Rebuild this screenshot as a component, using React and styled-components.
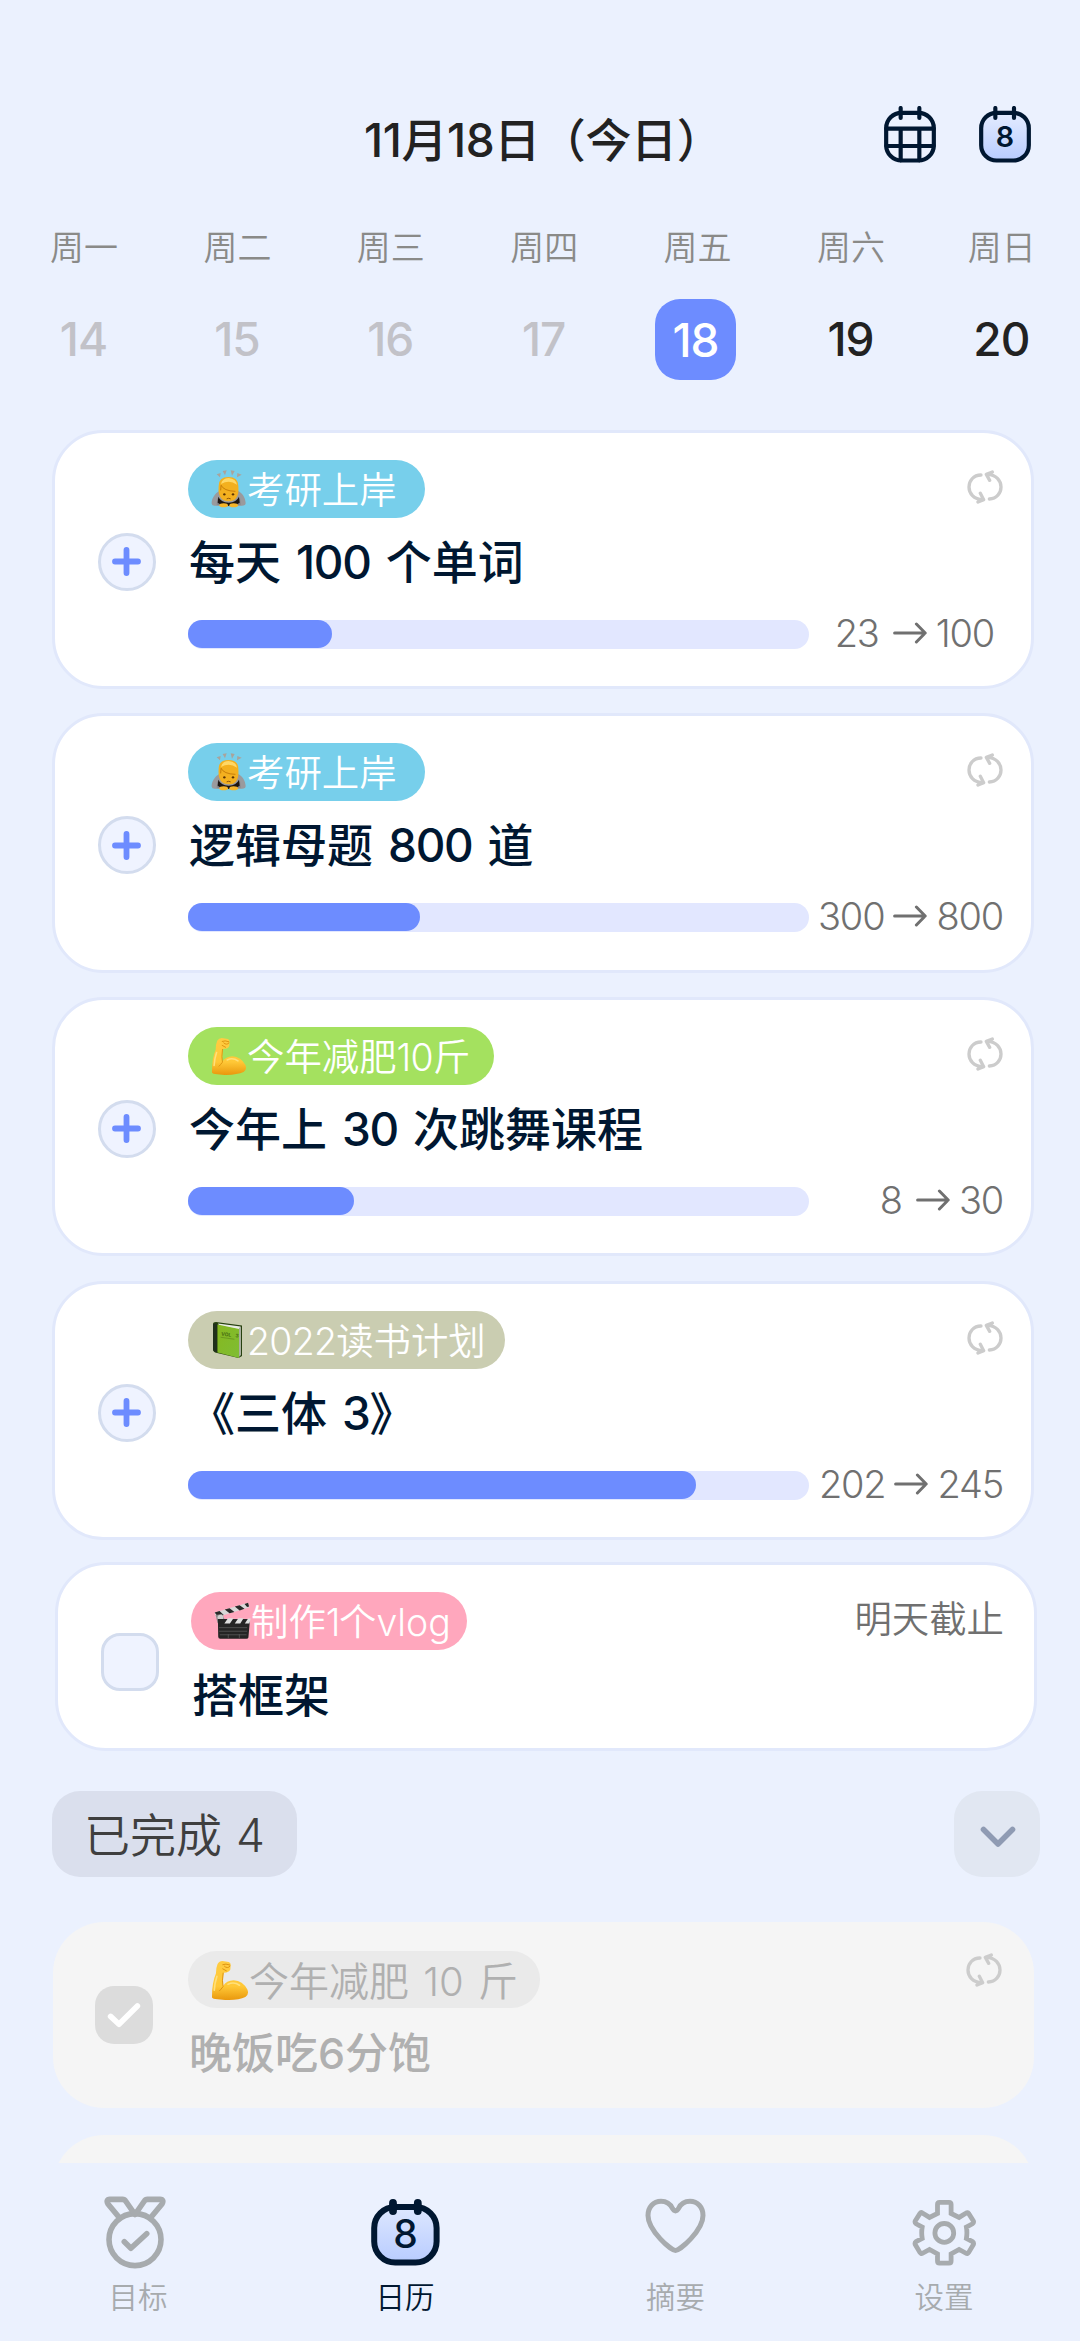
import React from 'react';
import styled, { createGlobalStyle } from 'styled-components';

const GlobalStyle = createGlobalStyle`
  * {
    box-sizing: border-box;
  }

  body {
    margin: 0;
    background: #ebf1fe;
    font-family: Inter, "Noto Sans CJK SC", sans-serif;
  }
`

const Page = styled.div`
  width: 1080px;
  height: 2341px;
  display: flex;
  flex-direction: column;
  overflow: hidden;
  background: #ebf1fe;
`

const Header = styled.header`
  height: 202px;
  padding: 77px 49px 0 364px;
  display: flex;
  justify-content: space-between;
`

const Heading = styled.h1`
  margin: 27px 0 0;
  font-size: 46px;
  line-height: 72px;
  font-weight: 500;
  letter-spacing: -0.4px;
  white-space: nowrap;
  color: #222;
`

const HeaderIcons = styled.div`
  display: flex;
  gap: 43px;
  padding-top: 29px;
`

const Week = styled.div`
  height: 202px;
  padding: 20px 0 0 43px;
  display: flex;
  gap: 71.4px;
`

const Day = styled.div`
  width: 82px;
  display: flex;
  flex-direction: column;
  align-items: center;

  &:last-child {
    width: 77px;
  }
`

const DayName = styled.span`
  font-size: 34px;
  line-height: 52px;
  font-weight: 350;
  color: #8a8a88;
  white-space: nowrap;
`

const DayNumber = styled.span`
  width: 81px;
  height: 81px;
  flex: none;
  margin-top: 25px;
  margin-right: ${p => (p.$active ? '4px' : '1px')};
  border-radius: 25px;
  font-size: 46px;
  line-height: ${p => (p.$active ? 83 : 80)}px;
  font-weight: 500;
  letter-spacing: -1px;
  text-align: center;
  background: ${p => (p.$active ? '#6d8cff' : 'transparent')};
  color: ${p => (p.$active ? '#fff' : p.$past ? '#c2c2c8' : '#222')};
`

const List = styled.main`
  flex: 1;
  min-height: 0;
  overflow: hidden;
  padding: 25.6px 46px 0 52px;
`

const Card = styled.section`
  width: 982px;
  height: ${p => (p.$short ? '188.6px' : '259.4px')};
  margin-top: ${p => (p.$short ? '-2.4px' : 0)};
  margin-bottom: ${p => (p.$short ? '40px' : '24.3px')};
  margin-left: ${p => (p.$short ? '3px' : 0)};
  padding: 27px 28px 0 43px;
  display: flex;
  border: 3px solid #e1e8fb;
  border-radius: 51px;
  background: #fff;
`

const DoneCard = styled(Card)`
  width: 981px;
  height: 186px;
  margin: 0 0 27px 1px;
  padding: 29px 32px 0 45px;
  border: 0;
  background: #f5f5f5;
`

const Side = styled.div`
  width: 90px;
  flex: none;
  padding-top: ${p => p.$top}px;
`

const Body = styled.div`
  flex: 1;
  min-width: 0;
`

const TopRow = styled.div`
  display: flex;
  justify-content: space-between;
  align-items: flex-start;
`

const RepeatSlot = styled.div`
  padding-top: ${p => p.$top || 0}px;
`

const Tag = styled.span`
  height: ${p => (p.$done ? 57 : 58)}px;
  padding: 0 ${p => p.$end || 28}px ${p => (p.$done ? 0 : 2)}px 23px;
  display: flex;
  align-items: center;
  border-radius: 29px;
  font-size: ${p => (p.$done ? 40 : 37.4)}px;
  font-weight: 350;
  word-spacing: 3px;
  white-space: nowrap;
  background: ${p => p.$bg};
  color: ${p => (p.$done ? '#b0b0b0' : '#fff')};
`

const Title = styled.h2`
  margin: ${p => p.$top}px 0 0 1px;
  font-size: ${p => (p.$done ? 43 : 46)}px;
  line-height: 60px;
  font-weight: 500;
  word-spacing: 2.6px;
  white-space: pre;
  color: ${p => (p.$done ? '#b0b0b0' : '#001731')};
`

const Digits = styled.span`
  letter-spacing: ${p => p.$spacing}px;
`

const ProgressRow = styled.div`
  height: 46px;
  margin-top: 19px;
  display: flex;
  align-items: center;
  justify-content: space-between;
`

const Track = styled.div`
  width: 621px;
  height: 29px;
  margin-top: 1px;
  border-radius: 15px;
  background: #e2e7ff;
`

const Fill = styled.div`
  height: 28px;
  border-radius: 14px;
  background: #6d8cff;
`

const Amount = styled.div`
  display: flex;
  align-items: center;
  gap: 9px;
  margin-right: ${p => p.$end || 0}px;
  padding-bottom: 2px;
  font-size: 38px;
  font-weight: 360;
  letter-spacing: -1.2px;
  color: #707070;
`

const From = styled.span`
  margin-right: ${p => p.$gap || 0}px;
`

const AddButton = styled.button`
  width: 58px;
  height: 58px;
  padding: 0 1px 0 0;
  display: flex;
  align-items: center;
  justify-content: center;
  border: 3px solid #d3dcee;
  border-radius: 50%;
  background: #eff3ff;
`

const CheckBox = styled.div`
  width: 58px;
  height: 58px;
  margin-left: ${p => (p.$checked ? -3 : -0.5)}px;
  display: flex;
  align-items: center;
  justify-content: center;
  border: ${p => (p.$checked ? 0 : '3px solid #d3dcee')};
  border-radius: 19px;
  background: ${p => (p.$checked ? '#dcdcdc' : '#eff3ff')};
`

const Deadline = styled.span`
  margin-right: 2px;
  font-size: 37.4px;
  line-height: 56px;
  font-weight: 350;
  color: #707070;
`

const DoneBar = styled.div`
  width: 988px;
  margin-bottom: 45px;
  display: flex;
  justify-content: space-between;
`

const DoneLabel = styled.div`
  width: 245px;
  height: 86px;
  padding-left: 32px;
  border-radius: 28px;
  font-size: 46px;
  line-height: 88px;
  font-weight: 350;
  word-spacing: 1px;
  white-space: pre;
  color: #3f3f3f;
  background: #dadfed;
`

const FoldButton = styled.button`
  width: 86px;
  height: 86px;
  padding: 6px 0 0 2px;
  display: flex;
  align-items: center;
  justify-content: center;
  border: 0;
  border-radius: 28px;
  background: #e1e7f2;
`

const TabBar = styled.nav`
  height: 178px;
  display: grid;
  grid-template-columns: repeat(4, 1fr);
`

const Tab = styled.div`
  display: flex;
  flex-direction: column;
  align-items: center;
  color: ${p => (p.$active ? '#001731' : '#a7abae')};
`

const TabIcon = styled.div`
  height: 112px;
  padding-top: ${p => p.$top}px;
`

const TabLabel = styled.span`
  margin-left: ${p => p.$shift || 0}px;
  font-size: 29.5px;
  line-height: 44px;
  font-weight: 350;
`

const Icon = styled.svg`
  display: block;
  flex: none;
  fill: none;
  stroke-linecap: round;
  stroke-linejoin: round;
`

const Emoji = styled(Icon)`
  margin-top: 2px;
`

const GridCalendarIcon = () => (
    <Icon width="52" height="57" viewBox="72 48 156 171" stroke="#001731" strokeWidth="12.5">
        <rect x="78.5" y="68.5" width="143" height="143" rx="46"/>
        <path d="M79 116H221M79 168H221M122 116V211M178 116V211M122 54V84M178 54V84"/>
    </Icon>
)

const DayCalendarIcon = () => (
    <Icon width="52" height="57" viewBox="72 48 156 171" stroke="#001731" strokeWidth="12.5">
        <defs>
            <linearGradient id="day" x1="0" y1="0" x2="0" y2="1">
                <stop offset="0" stopColor="#e4ecff"/>
                <stop offset="1" stopColor="#b8ccff"/>
            </linearGradient>
        </defs>
        <rect x="78.5" y="68.5" width="143" height="143" rx="46" fill="url(#day)"/>
        <path d="M121 54V84M177 54V84"/>
        <text x="150" y="171" fontSize="86" fontWeight="600" textAnchor="middle" fill="#001731" stroke="none">8</text>
    </Icon>
)

const CalendarTabIcon = () => (
    <Icon width="69" height="68" viewBox="0 0 69 68" stroke="#001731" strokeWidth="6">
        <defs>
            <linearGradient id="tab" x1="0" y1="0" x2="0" y2="1">
                <stop offset="0" stopColor="#dde7ff"/>
                <stop offset="1" stopColor="#b8ccff"/>
            </linearGradient>
        </defs>
        <rect x="3.2" y="9" width="62.4" height="55.6" rx="21" fill="url(#tab)"/>
        <path d="M22 5V13M46.8 5V13" strokeWidth="7.8"/>
        <text x="34.4" y="50.2" fontSize="39" fontWeight="500" textAnchor="middle" fill="#001731" stroke="none">8</text>
    </Icon>
)

const MedalIcon = () => (
    <Icon width="62" height="73" viewBox="0 0 62 73" stroke="currentColor" strokeWidth="5.6">
        <circle cx="31" cy="43.6" r="26"/>
        <path d="M14.8 21L4 8Q1.6 3.6 6 3.4H18.5Q20.6 3.4 21.6 5L31 18.5L40.4 5Q41.4 3.4 43.5 3.4H56Q60.4 3.6 58 8L47.2 21"/>
        <path d="M20.3 45.7L26.9 52.3L42.7 37.7"/>
    </Icon>
)

const HeartIcon = () => (
    <Icon width="61" height="56" viewBox="0 0 61 56" stroke="currentColor" strokeWidth="5">
        <path d="M30.5 52.4C26 52.4 3 32.5 3 17.5C3 9 8.5 3.3 16 3.3C21.5 3.3 25.4 6.2 27.5 10.5Q30.5 15.3 33.5 10.5C35.6 6.2 39.5 3.3 45 3.3C52.5 3.3 58 9 58 17.5C58 32.5 35 52.4 30.5 52.4Z"/>
    </Icon>
)

const GearIcon = () => (
    <Icon width="66" height="68" viewBox="0 0 66 68" stroke="currentColor" strokeWidth="4.8">
        <path strokeLinejoin="miter" d="M25.5 14.4V5.5Q25.5 3.4 27.5 3.4H37Q39.1 3.4 39.1 5.5V14.4L47.1 18.4L54.2 14Q55.6 13 56.6 14.4L61.4 22Q62 23.8 60.5 24.8L54.4 28Q55.4 33.7 54.4 39.4L60.5 42.6Q62 43.6 61.4 45.4L56.6 53.6Q55.6 55.2 54 54.2L47.1 50.4L39.1 55V62Q39.1 64.2 37 64.2H27.5Q25.5 64.2 25.5 62V55L17.5 50.4L10.6 54.2Q9 55.2 8 53.6L3.2 45.4Q2.6 43.6 4.1 42.6L10.2 39.4Q9.2 33.7 10.2 28L4.1 24.8Q2.6 23.8 3.2 22L8 14.4Q9 13 10.4 14L17.5 18.4Z"/>
        <circle cx="32.3" cy="33.9" r="9.4"/>
    </Icon>
)

const RepeatIcon = () => (
    <Icon width="36" height="34" viewBox="1223 148 108 102" stroke="#ccc" strokeWidth="10">
        <path d="M1265 163C1242 163 1229 181 1229 199C1229 218 1243 236 1270 237M1263 218L1273 237L1256 244"/>
        <path d="M1290 235C1312 234 1325 217 1325 199C1325 180 1310 162 1285 161M1291 179L1281 161L1299 154"/>
    </Icon>
)

const PlusIcon = () => (
    <Icon width="29" height="29" viewBox="0 0 29 29" stroke="#6d8cff" strokeWidth="5.8">
        <path d="M14.5 3V26M3 14.5H26"/>
    </Icon>
)

const CheckIcon = () => (
    <Icon width="34" height="26" viewBox="0 0 34 26" stroke="#fff" strokeWidth="5.6">
        <path d="M3.6 14.4L12 22.2L30.4 4"/>
    </Icon>
)

const ChevronIcon = () => (
    <Icon width="36" height="22" viewBox="0 0 36 22" stroke="#8f9bb3" strokeWidth="5.6">
        <path d="M3.5 3.5L18 18L32.5 3.5"/>
    </Icon>
)

const ArrowIcon = () => (
    <Icon width="34" height="22" viewBox="0 0 34 22" stroke="#707070" strokeWidth="3">
        <path d="M1.6 11H32M23.4 2L32.2 11L23.4 20"/>
    </Icon>
)

const BowEmoji = () => (
    <Emoji width="36" height="40" viewBox="511 139 108 120">
        <path fill="#aaa39b" d="M528 155L540 151L538 164ZM546 145L558 143L553 158ZM570 143L582 145L574 159ZM590 151L603 156L589 164Z"/>
        <path fill="#9a9a9d" d="M537 204C521 212 512 230 513 243Q514 250 524 249L548 251L580 251L604 249Q615 249 615 241C614 224 605 210 590 204Z"/>
        <path fill="#85858a" d="M530 226L528 246L544 248ZM598 226L600 246L584 248Z"/>
        <path fill="#1d1510" d="M533 222Q540 238 564 240Q588 238 595 222L597 240Q582 250 564 250Q546 250 531 240Z"/>
        <path fill="#f3b01f" d="M534 190Q534 163 563 163Q593 163 593 190Q597 236 564 236Q530 236 534 190Z"/>
        <path fill="#ffd866" d="M541 184Q544 167 564 166Q586 168 589 186Q566 170 541 184Z"/>
        <path stroke="#c87e09" strokeWidth="3" d="M541 188Q549 205 583 206M541 190L540 202"/>
        <circle cx="551" cy="215" r="3.6" fill="#5a3305"/>
        <circle cx="577" cy="215" r="3.6" fill="#5a3305"/>
        <path stroke="#8f5407" strokeWidth="3" d="M559 228Q564 225 569 228"/>
        <ellipse cx="549" cy="248" rx="13" ry="6" fill="#f5b52a"/>
        <ellipse cx="579" cy="248" rx="13" ry="6" fill="#f5b52a"/>
    </Emoji>
)

const MuscleEmoji = ({ size = 36 }) => (
    <Emoji width={size} height={size * 1.07} viewBox="513 174 116 124">
        <defs>
            <linearGradient id="skin" x1="0" y1="0" x2="0" y2="1">
                <stop offset="0" stopColor="#ffcc42"/>
                <stop offset="0.65" stopColor="#ffc837"/>
                <stop offset="1" stopColor="#e9980d"/>
            </linearGradient>
        </defs>
        <path fill="url(#skin)" d="M533 186Q538 177 548 177L567 180Q574 182 573 190L572 203Q569 212 552 213Q548 228 550 253Q560 237 582 236Q610 238 624 264Q630 279 618 287Q596 297 556 296L526 293Q515 292 516 286Q516 243 528 215Q528 198 533 186Z"/>
        <path stroke="#dd920f" strokeWidth="3" d="M550 214Q546 240 550 255Q543 264 539 268M549 188Q558 184 570 189M554 193Q563 202 571 193M549 201L560 207"/>
        <path stroke="#ffe07b" strokeWidth="5" d="M531 224Q524 245 523 266M565 248Q583 239 600 251"/>
    </Emoji>
)

const BookEmoji = () => (
    <Emoji width="36" height="38" viewBox="0 0 36 38">
        <defs>
            <linearGradient id="cover" x1="0" y1="0" x2="1" y2="1">
                <stop offset="0" stopColor="#86b81f"/>
                <stop offset="1" stopColor="#7fbd34"/>
            </linearGradient>
        </defs>
        <path fill="#26400f" d="M2 3Q2 1 5 1L31 4.5V35L27.5 37L4 31.5Q2 31 2 28Z"/>
        <path fill="#e9ece4" d="M7 2.5L29.5 5.4V9L8 4.5Z"/>
        <path fill="url(#cover)" d="M6.5 3.5L28 8V37L6.5 31.5Z"/>
        <path fill="#a9afa0" d="M28 7L30 5.5V34L28 36Z"/>
        <path fill="#20301b" d="M2 3L6 2.5V31.2L3.5 30.7Q2 30 2 28Z"/>
        <text x="10" y="14.5" fontSize="5" fontWeight="700" fill="#496f12" transform="rotate(7 10 14)">VOL 3</text>
        <path stroke="#618b1b" strokeWidth="0.7" d="M10 16.3L23 18.2"/>
    </Emoji>
)

const ClapperEmoji = () => (
    <Emoji width="37" height="38" viewBox="515 180 114 117">
        <path fill="#d8d8d8" d="M517 212L620 182L624 196L521 228Z"/>
        <path fill="#292929" d="M517 212L532 208L545 220L528 226ZM548 203L563 199L578 211L563 215ZM579 194L594 190L609 201L594 206ZM609 186L620 182L623 194L617 195Z"/>
        <path fill="#8a8a8a" d="M520 220L540 217L547 232L546 245H526Z"/>
        <circle cx="535" cy="228" r="9" fill="#cfcfcf"/>
        <path fill="#252525" d="M527 232H626L621 289Q620 293 615 293H534Q528 293 528 287Z"/>
        <path fill="#dedede" d="M547 246L558 230H575L564 246ZM579 246L590 230H606L596 246ZM610 246L620 231H628L624 246Z"/>
        <path stroke="#777" strokeWidth="1.6" d="M532 259H616M532 270H616M534 281H614M559 281V290M593 281V290"/>
    </Emoji>
)

const week = [
    { name: '周一', day: 14, past: true },
    { name: '周二', day: 15, past: true },
    { name: '周三', day: 16, past: true },
    { name: '周四', day: 17, past: true },
    { name: '周五', day: 18, active: true },
    { name: '周六', day: 19 },
    { name: '周日', day: 20 },
]

const goals = [
    { tag: '考研上岸', emoji: <BowEmoji/>, bg: '#77cfeb', title: '每天 100 个单词', done: 144, from: 23, to: 100, gap: 5, end: 9 },
    { tag: '考研上岸', emoji: <BowEmoji/>, bg: '#77cfeb', title: '逻辑母题 800 道', done: 232, from: 300, to: 800 },
    { tag: '今年减肥10斤', emoji: <MuscleEmoji/>, bg: '#a4e15f', title: '今年上 30 次跳舞课程', done: 166, from: 8, to: 30, gap: 5, tagEnd: 24 },
    { tag: '2022读书计划', emoji: <BookEmoji/>, bg: '#cacdb1', title: '《三体 3》', done: 508, from: 202, to: 245, tagEnd: 19 },
]

const tabs = [
    { label: '目标', icon: <MedalIcon/>, top: 33, shift: 6 },
    { label: '日历', icon: <CalendarTabIcon/>, top: 35, active: true },
    { label: '摘要', icon: <HeartIcon/>, top: 35, shift: 1 },
    { label: '设置', icon: <GearIcon/>, top: 36, shift: -2 },
]

// digits sit tighter than the characters around them
const tighten = (text, spacing) => text.split(/(\d+)/).map((part, i) => (
    i % 2 ? <Digits key={i} $spacing={spacing}>{part}</Digits> : part
))

const Goal = ({ goal }) => (
    <Card>
        <Side $top={73}>
            <AddButton><PlusIcon/></AddButton>
        </Side>
        <Body>
            <TopRow>
                <Tag $bg={goal.bg} $end={goal.tagEnd}>{goal.emoji}<span>{tighten(goal.tag, -0.7)}</span></Tag>
                <RepeatSlot $top={10}><RepeatIcon/></RepeatSlot>
            </TopRow>
            <Title $top={14}>{tighten(goal.title, -1.2)}</Title>
            <ProgressRow>
                <Track><Fill style={{ width: goal.done }}/></Track>
                <Amount $end={goal.end}>
                    <From $gap={goal.gap}>{goal.from}</From>
                    <ArrowIcon/>
                    <span>{goal.to}</span>
                </Amount>
            </ProgressRow>
        </Body>
    </Card>
)

const App = () => {
    return (
        <Page>
            <GlobalStyle/>
            <Header>
                <Heading>11月18日（今日）</Heading>
                <HeaderIcons>
                    <GridCalendarIcon/>
                    <DayCalendarIcon/>
                </HeaderIcons>
            </Header>
            <Week>
                {week.map(d => (
                    <Day key={d.day}>
                        <DayName>{d.name}</DayName>
                        <DayNumber $active={d.active} $past={d.past}>{d.day}</DayNumber>
                    </Day>
                ))}
            </Week>
            <List>
                {goals.map(goal => <Goal key={goal.title} goal={goal}/>)}
                <Card $short>
                    <Side $top={41}><CheckBox/></Side>
                    <Body>
                        <TopRow>
                            <Tag $bg="#ffa7bd" $end={16}><ClapperEmoji/><span>制作{tighten('1', -1.5)}个vlog</span></Tag>
                            <Deadline>明天截止</Deadline>
                        </TopRow>
                        <Title $top={15}>搭框架</Title>
                    </Body>
                </Card>
                <DoneBar>
                    <DoneLabel>已完成 4</DoneLabel>
                    <FoldButton><ChevronIcon/></FoldButton>
                </DoneBar>
                <DoneCard>
                    <Side $top={35}><CheckBox $checked><CheckIcon/></CheckBox></Side>
                    <Body>
                        <TopRow>
                            <Tag $done $bg="#eaeaea" $end={22}><MuscleEmoji size={38}/><span>今年减肥 10 斤</span></Tag>
                            <RepeatSlot $top={2}><RepeatIcon/></RepeatSlot>
                        </TopRow>
                        <Title $done $top={15}>晚饭吃6分饱</Title>
                    </Body>
                </DoneCard>
                <DoneCard/>
            </List>
            <TabBar>
                {tabs.map(t => (
                    <Tab key={t.label} $active={t.active}>
                        <TabIcon $top={t.top}>{t.icon}</TabIcon>
                        <TabLabel $shift={t.shift}>{t.label}</TabLabel>
                    </Tab>
                ))}
            </TabBar>
        </Page>
    );
};

export default App;
